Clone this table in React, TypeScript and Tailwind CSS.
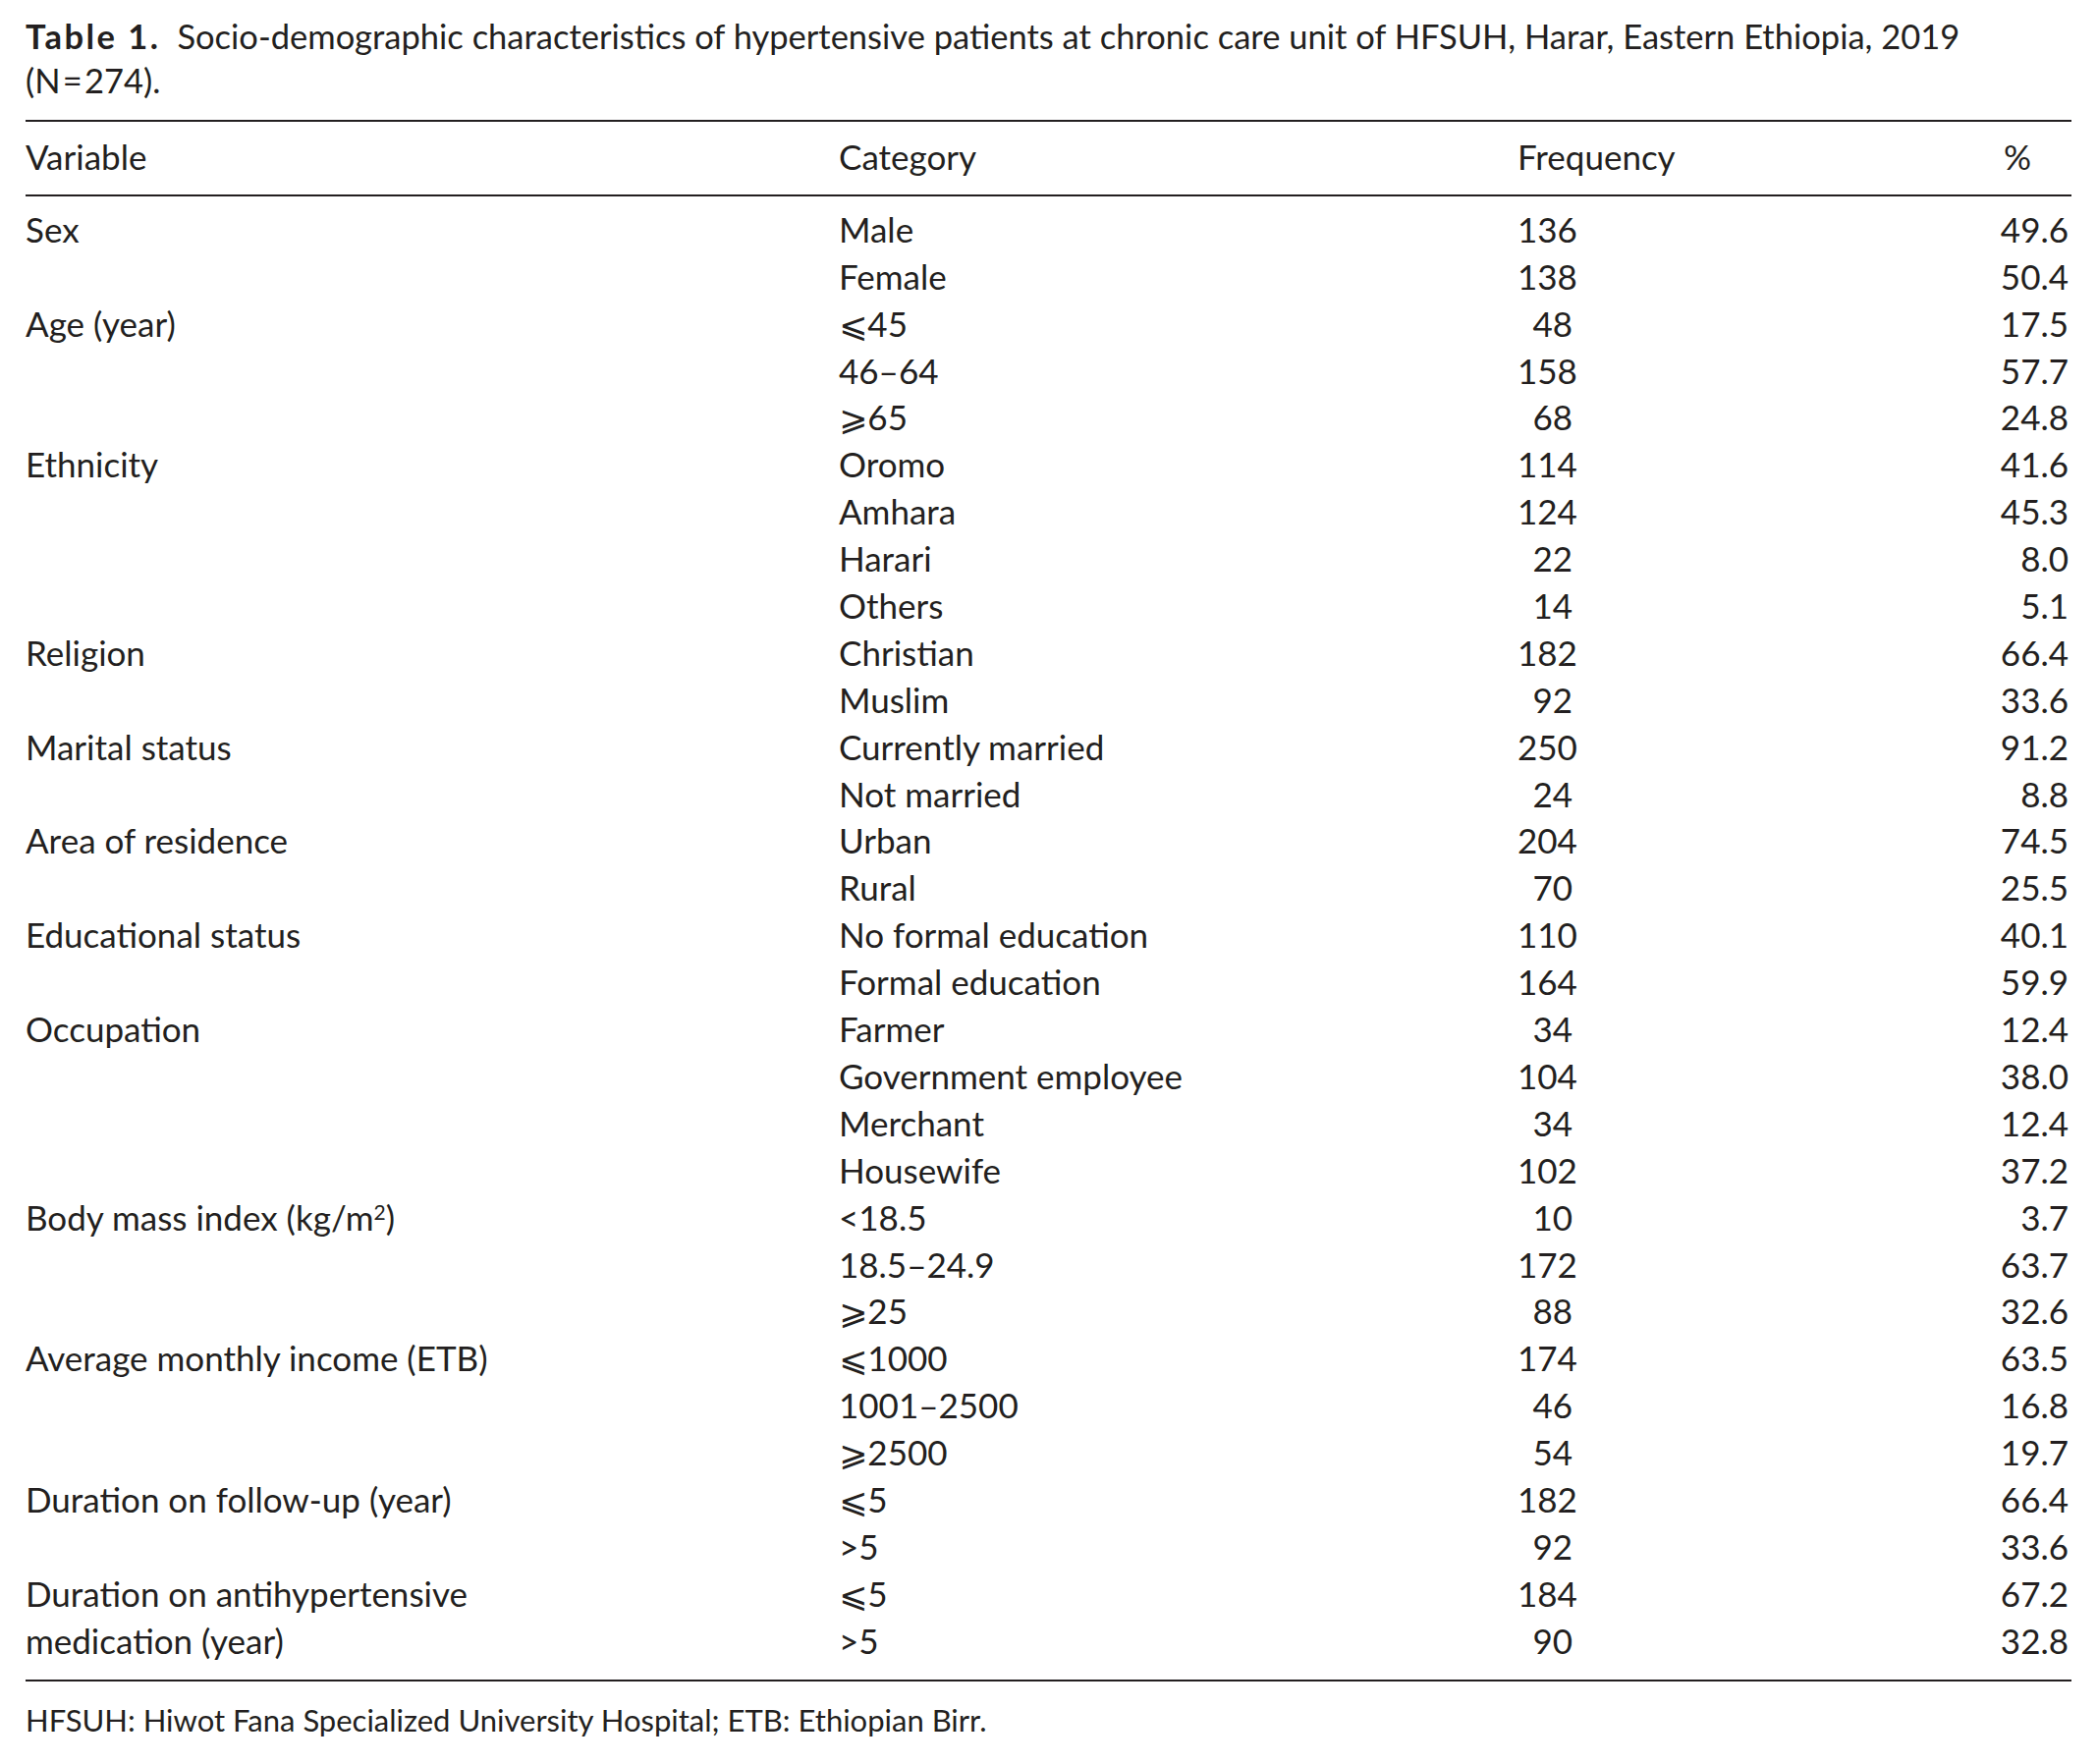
const rows: [React.ReactNode, string, string, string][] = [
  ["Sex", "Male", "136", "49.6"],
  ["", "Female", "138", "50.4"],
  ["Age (year)", "⩽45", "48", "17.5"],
  ["", "46–64", "158", "57.7"],
  ["", "⩾65", "68", "24.8"],
  ["Ethnicity", "Oromo", "114", "41.6"],
  ["", "Amhara", "124", "45.3"],
  ["", "Harari", "22", "8.0"],
  ["", "Others", "14", "5.1"],
  ["Religion", "Christian", "182", "66.4"],
  ["", "Muslim", "92", "33.6"],
  ["Marital status", "Currently married", "250", "91.2"],
  ["", "Not married", "24", "8.8"],
  ["Area of residence", "Urban", "204", "74.5"],
  ["", "Rural", "70", "25.5"],
  ["Educational status", "No formal education", "110", "40.1"],
  ["", "Formal education", "164", "59.9"],
  ["Occupation", "Farmer", "34", "12.4"],
  ["", "Government employee", "104", "38.0"],
  ["", "Merchant", "34", "12.4"],
  ["", "Housewife", "102", "37.2"],
  [
    <>
      Body mass index (kg/m<sup className="text-[0.6em]">2</sup>)
    </>,
    "<18.5",
    "10",
    "3.7",
  ],
  ["", "18.5–24.9", "172", "63.7"],
  ["", "⩾25", "88", "32.6"],
  ["Average monthly income (ETB)", "⩽1000", "174", "63.5"],
  ["", "1001–2500", "46", "16.8"],
  ["", "⩾2500", "54", "19.7"],
  ["Duration on follow-up (year)", "⩽5", "182", "66.4"],
  ["", ">5", "92", "33.6"],
  ["Duration on antihypertensive", "⩽5", "184", "67.2"],
  ["medication (year)", ">5", "90", "32.8"],
];

const App = () => {
  return (
    <div
      className="min-h-screen bg-white text-[#231f20]"
      style={{ fontFamily: "Lato, 'DejaVu Sans', sans-serif" }}
    >
      <div className="px-[26px]">
        {/* Caption */}
        <p className="pt-[14px] pb-[18px] text-[34.5px] leading-[45px] whitespace-nowrap">
          <span className="mr-[8px] font-bold tracking-[2.5px]">Table 1.</span>{" "}
          Socio-demographic characteristics of hypertensive patients at chronic
          care unit of HFSUH, Harar, Eastern Ethiopia, 2019
          <br />
          (N{"\u200A"}={"\u200A"}274).
        </p>

        <div className="border-t-2 border-[#231f20]" />

        {/* Header */}
        <div className="grid grid-cols-[828px_691px_56px_1fr] pt-[12px] pb-[14px] text-[35px] leading-[47.9px]">
          <span>Variable</span>
          <span>Category</span>
          <span className="whitespace-nowrap">Frequency</span>
          <span className="pr-[41px] text-right">%</span>
        </div>

        <div className="border-t-2 border-[#231f20]" />

        {/* Body */}
        <div className="pt-[10px] pb-[15px] text-[35px] leading-[47.9px]">
          {rows.map((r, i) => (
            <div
              key={i}
              className="grid h-[47.9px] grid-cols-[828px_691px_56px_1fr] whitespace-nowrap"
            >
              <span>{r[0]}</span>
              <span>{r[1]}</span>
              <span className="text-right">{r[2]}</span>
              <span className="pr-[3px] text-right">{r[3]}</span>
            </div>
          ))}
        </div>

        <div className="border-t-2 border-[#231f20]" />

        {/* Footnote */}
        <p className="pt-[19px] text-[31px] leading-[40px]">
          HFSUH: Hiwot Fana Specialized University Hospital; ETB: Ethiopian
          Birr.
        </p>
      </div>
    </div>
  );
};

export default App;
